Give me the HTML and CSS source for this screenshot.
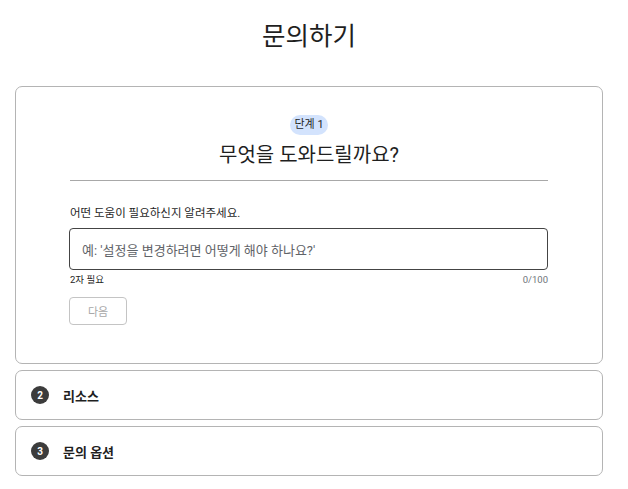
FILE: index.html
```html
<!DOCTYPE html>
<html lang="ko">
<head>
<meta charset="utf-8">
<title>문의하기</title>
<link rel="stylesheet" href="styles.css">
</head>
<body>
<div class="page">
  <h1 class="title">문의하기</h1>

  <section class="card step-card">
    <div class="badge">단계 1</div>
    <h2 class="question">무엇을 도와드릴까요?</h2>
    <hr class="divider">
    <label class="label" for="q">어떤 도움이 필요하신지 알려주세요.</label>
    <div class="input-box" id="q">예: '설정을 변경하려면 어떻게 해야 하나요?'</div>
    <div class="helper">
      <span class="req">2자 필요</span>
      <span class="count">0/100</span>
    </div>
    <button class="next" disabled>다음</button>
  </section>

  <section class="card collapsed">
    <span class="num">2</span>
    <span class="step-name">리소스</span>
  </section>

  <section class="card collapsed">
    <span class="num">3</span>
    <span class="step-name">문의 옵션</span>
  </section>
</div>
</body>
</html>
```

FILE: styles.css
```css
* { box-sizing: border-box; }

body {
  margin: 0;
  background: #ffffff;
  font-family: Roboto, "Noto Sans CJK KR", "Noto Sans", sans-serif;
  color: #1f1f1f;
}

.page {
  width: 588px;
  margin-left: 15px;
  display: flex;
  flex-direction: column;
  gap: 6px;
}

.title {
  margin: 20px 0 28px;
  font-size: 25.5px;
  line-height: 32px;
  font-weight: 400;
  text-align: center;
  color: #1f1f1f;
}

.card {
  border: 1px solid #b4b4b4;
  border-radius: 7px;
  background: #fff;
}

.step-card {
  height: 278px;
  padding: 28px 54px 0;
  display: flex;
  flex-direction: column;
  align-items: stretch;
}

.badge {
  align-self: center;
  height: 20px;
  padding: 0 4px;
  border-radius: 10px;
  background: #d3e3fd;
  color: #1f1f1f;
  font-size: 11px;
  line-height: 20px;
}

.question {
  margin: 8px 0 0;
  font-size: 20px;
  line-height: 24px;
  font-weight: 400;
  text-align: center;
  color: #1f1f1f;
}

.divider {
  margin: 13px 0 0;
  border: 0;
  border-top: 1px solid #a8a8a8;
  height: 0;
}

.label {
  margin-top: 25px;
  font-size: 11.5px;
  line-height: 14px;
  color: #1f1f1f;
}

.input-box {
  margin: 8px 0 0 -1px;
  height: 42px;
  border: 1px solid #444;
  border-radius: 4px;
  padding: 0 12px;
  display: flex;
  align-items: center;
  font-size: 13px;
  color: #5f6368;
}

.helper {
  margin-top: 3px;
  display: flex;
  justify-content: space-between;
  font-size: 9.5px;
  line-height: 14px;
}

.req { color: #1f1f1f; }
.count { color: #70757a; }

.next {
  margin: 10px 0 0 -1px;
  align-self: flex-start;
  width: 58px;
  height: 28px;
  border: 1px solid #c4c4c4;
  border-radius: 4px;
  background: #fff;
  color: #a8a8a8;
  font-family: inherit;
  font-size: 11px;
  padding: 0;
}

.collapsed {
  height: 50px;
  padding: 0 15px;
  display: flex;
  align-items: center;
  gap: 14px;
}

.num {
  width: 18px;
  height: 18px;
  border-radius: 50%;
  background: #3c3c3c;
  color: #fff;
  font-size: 10px;
  font-weight: 700;
  display: flex;
  align-items: center;
  justify-content: center;
}

.step-name {
  font-size: 13px;
  font-weight: 700;
  color: #1f1f1f;
}
```
